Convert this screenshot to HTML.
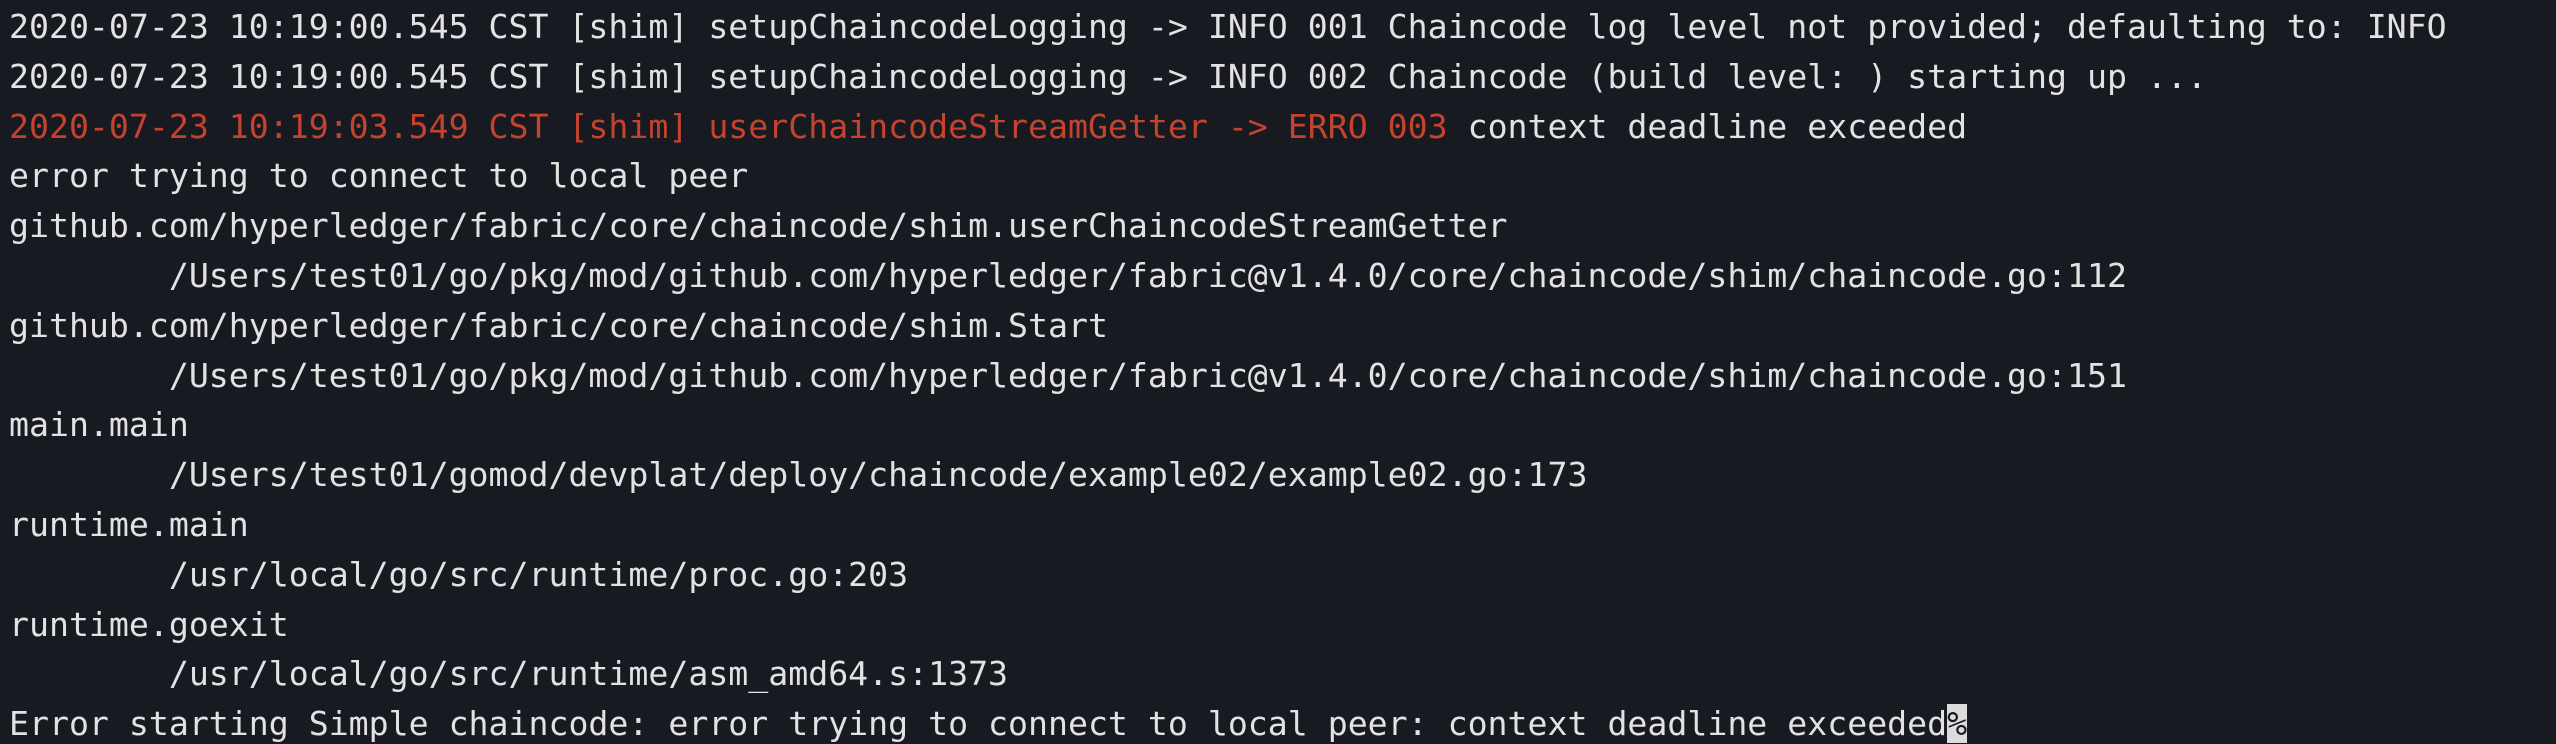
<!DOCTYPE html>
<html><head><meta charset="utf-8"><style>
html,body{margin:0;padding:0;background:#181a21;width:2556px;height:744px;overflow:hidden}
pre{margin:0;padding:2px 0 0 9px;font-family:"DejaVu Sans Mono","Liberation Mono",monospace;font-size:33.2px;line-height:49.8px;color:#e2e2e2;white-space:pre}
.r{color:#c4432f}
.c{background:#dcdcdc;color:#181a21}
</style></head><body><pre>2020-07-23 10:19:00.545 CST [shim] setupChaincodeLogging -&gt; INFO 001 Chaincode log level not provided; defaulting to: INFO
2020-07-23 10:19:00.545 CST [shim] setupChaincodeLogging -&gt; INFO 002 Chaincode (build level: ) starting up ...
<span class="r">2020-07-23 10:19:03.549 CST [shim] userChaincodeStreamGetter -&gt; ERRO 003</span> context deadline exceeded
error trying to connect to local peer
github.com/hyperledger/fabric/core/chaincode/shim.userChaincodeStreamGetter
        /Users/test01/go/pkg/mod/github.com/hyperledger/fabric@v1.4.0/core/chaincode/shim/chaincode.go:112
github.com/hyperledger/fabric/core/chaincode/shim.Start
        /Users/test01/go/pkg/mod/github.com/hyperledger/fabric@v1.4.0/core/chaincode/shim/chaincode.go:151
main.main
        /Users/test01/gomod/devplat/deploy/chaincode/example02/example02.go:173
runtime.main
        /usr/local/go/src/runtime/proc.go:203
runtime.goexit
        /usr/local/go/src/runtime/asm_amd64.s:1373
Error starting Simple chaincode: error trying to connect to local peer: context deadline exceeded<span class="c">%</span></pre></body></html>
